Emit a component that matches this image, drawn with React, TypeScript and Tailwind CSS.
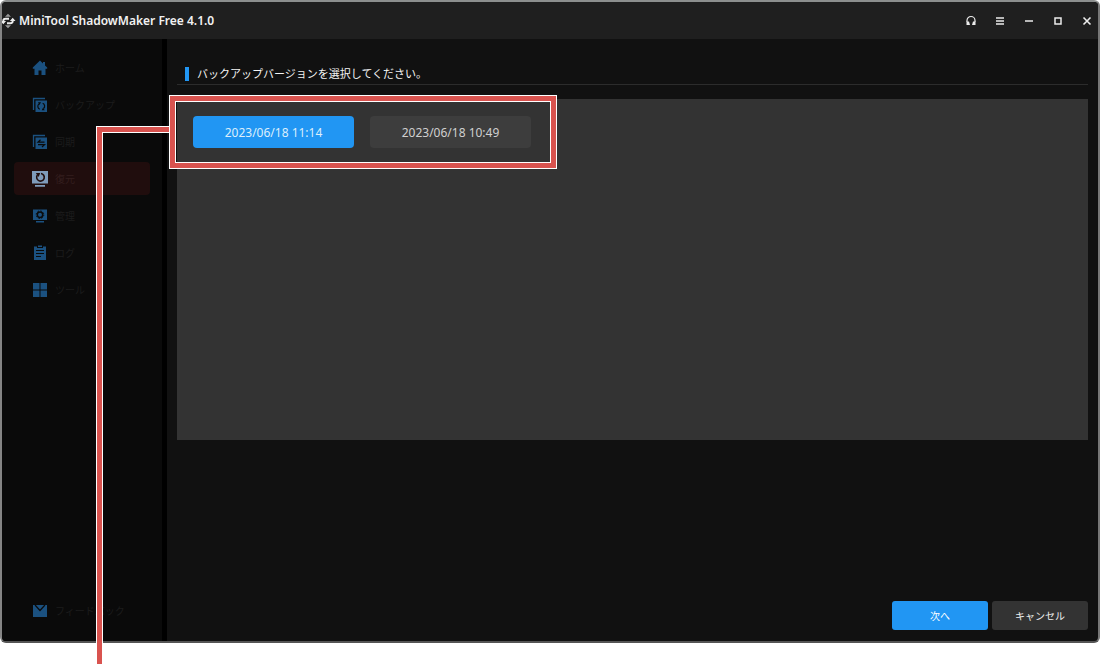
import { useState } from "react";
import type { ReactNode } from "react";

const HomeIcon = () => (
  <svg width="16" height="16" viewBox="0 0 16 16" fill="currentColor" aria-hidden="true">
    <path d="M8 .5.800 7.500v1.200H2.500V15h4v-4.500h3V15h4V8.700h1.700V7.500L13 5.400V2h-2v1.500z" />
  </svg>
);

const BackupIcon = () => (
  <svg width="16" height="16" viewBox="0 0 16 16" aria-hidden="true">
    <path d="M1.500 13V1.500H13" fill="none" stroke="currentColor" strokeWidth="1.300" />
    <rect x="3.500" y="3.500" width="11.500" height="11.500" fill="currentColor" />
    <path d="M7.800 12.300A3.200 3.200 0 0 1 7 6.900M10.700 6.200a3.200 3.200 0 0 1 .9 5.300" fill="none" stroke="#0a0a0a" strokeWidth="1.200" />
    <path d="M6 5.200h3L7.500 8zM12.700 13.200h-3l1.400-2.800z" fill="#0a0a0a" />
  </svg>
);

const SyncIcon = () => (
  <svg width="16" height="16" viewBox="0 0 16 16" aria-hidden="true">
    <path d="M1.500 13V1.500H13" fill="none" stroke="currentColor" strokeWidth="1.300" />
    <rect x="3.500" y="3.500" width="11.500" height="11.500" fill="currentColor" />
    <path d="M12.500 8.200H6L8.500 5.800M6 10.700h6.500L10 13" fill="none" stroke="#0a0a0a" strokeWidth="1.200" />
  </svg>
);

const RestoreIcon = () => (
  <svg width="18" height="18" viewBox="0 0 18 18" aria-hidden="true">
    <path d="M1 1h16v12.500H1zM4 15h10v1.800H4z" fill="#7f9bbb" />
    <path d="M6.400 5A3.800 3.800 0 1 0 10 3.500" fill="none" stroke="#200d0d" strokeWidth="1.600" />
    <path d="M4.800 3h4.400L7.700 7z" fill="#200d0d" />
  </svg>
);

const ManageIcon = () => (
  <svg width="16" height="16" viewBox="0 0 16 16" aria-hidden="true">
    <path d="M1 1.500h14v10.500H1zM4 13h8v1.500H4z" fill="currentColor" />
    <circle cx="8" cy="6.700" r="2.700" fill="none" stroke="#0a0a0a" strokeWidth="1.500" />
    <circle cx="8" cy="6.700" r="3.800" fill="none" stroke="#0a0a0a" strokeWidth="1" strokeDasharray="1.500 1.480" />
  </svg>
);

const LogIcon = () => (
  <svg width="16" height="16" viewBox="0 0 16 16" aria-hidden="true">
    <path d="M2 1.500h3V3h6V1.500h3v13.500H2zM6 .5h4v1.500H6z" fill="currentColor" />
    <path d="M4 5.500h8M4 8.500h8M4 11.500h5" stroke="#0a0a0a" strokeWidth="1.200" />
  </svg>
);

const ToolsIcon = () => (
  <svg width="16" height="16" viewBox="0 0 16 16" fill="currentColor" aria-hidden="true">
    <path d="M1 1h6.500v6.500H1zM8.500 1H15v6.500H8.500zM1 8.500h6.500V15H1zM8.500 8.500H15V15H8.500z" />
  </svg>
);

const MailIcon = () => (
  <svg width="16" height="16" viewBox="0 0 16 16" aria-hidden="true">
    <rect x="1" y="2" width="14" height="12" fill="currentColor" />
    <path d="M3 2l5 5.500L13 2" fill="none" stroke="#0a0a0a" strokeWidth="1.200" />
  </svg>
);

const Logo = () => (
  <svg width="16" height="16" viewBox="0 0 16 16" aria-hidden="true">
    <path d="M5 3.800 8 .8l3 3zM5 12.200l3 3 3-3z" fill="#9a9a9a" />
    <path d="M9 5.800H5.500Q3.300 5.800 3.300 8v1M7 10.200h3.500q2.200 0 2.200-2.200V7" fill="none" stroke="#ececec" strokeWidth="1.900" />
    <path d="M.5 8h5.600l-2.800 3.300zM9.900 8h5.600l-2.800-3.300z" fill="#ececec" />
  </svg>
);

const nav: { label: string; icon: ReactNode }[] = [
  { label: "ホーム", icon: <HomeIcon /> },
  { label: "バックアップ", icon: <BackupIcon /> },
  { label: "同期", icon: <SyncIcon /> },
  { label: "復元", icon: <RestoreIcon /> },
  { label: "管理", icon: <ManageIcon /> },
  { label: "ログ", icon: <LogIcon /> },
  { label: "ツール", icon: <ToolsIcon /> },
];

function NavItem({ label, icon, active }: { label: string; icon: ReactNode; active?: boolean }) {
  return (
    <button
      type="button"
      aria-current={active ? "page" : undefined}
      className={`flex h-[33px] w-full items-center gap-[6px] rounded px-[17px] text-[10px] ${
        active ? "bg-[#200d0d] text-[#331e1e]" : "text-[#1c1c1c]"
      }`}
    >
      <span className="flex w-[18px] justify-center text-[#1b5180]">{icon}</span>
      <span className="pt-0.5 whitespace-nowrap">{label}</span>
    </button>
  );
}

const windowControls: { label: string; icon: ReactNode }[] = [
  {
    label: "サポート",
    icon: (
      <>
        <path d="M2 7V5.500a4 4 0 0 1 8 0V7" fill="none" stroke="currentColor" strokeWidth="1.200" />
        <path d="M1.500 6.500H4l1 3.500H1.500zM10.500 6.500H8L7 10h3.500z" fill="currentColor" />
      </>
    ),
  },
  { label: "メニュー", icon: <path d="M2 3h8M2 6h8M2 9h8" stroke="currentColor" strokeWidth="1.500" /> },
  { label: "最小化", icon: <path d="M2 6h8" stroke="currentColor" strokeWidth="1.500" /> },
  {
    label: "最大化",
    icon: <rect x="3" y="3" width="6" height="6" fill="none" stroke="currentColor" strokeWidth="1.500" />,
  },
  { label: "閉じる", icon: <path d="m2.500 2.500 7 7m0-7-7 7" stroke="currentColor" strokeWidth="1.600" /> },
];

const versions = ["2023/06/18 11:14", "2023/06/18 10:49"];

export default function App() {
  const [selected, setSelected] = useState(0);

  return (
    <div className="relative flex min-h-screen flex-col bg-white pb-[21px] font-['Noto_Sans','Noto_Sans_CJK_JP',sans-serif]">
      <div className="flex flex-1 flex-col overflow-hidden rounded-md border-2 border-t-[#8c8f8e] border-r-[#777] border-b-[#555] border-l-[#858585] bg-[#111]">
        <header className="flex h-[37px] items-center justify-between bg-[#1f1f1f] pr-[3px]">
          <div className="flex items-center gap-[3px]">
            <span className="-ml-0.5">
              <Logo />
            </span>
            <h1 className="text-[12px] leading-4 font-semibold text-[#f2f2f2]">MiniTool ShadowMaker Free 4.1.0</h1>
          </div>
          <div className="flex items-center gap-[13px] text-[#ececec]">
            {windowControls.map((c) => (
              <button key={c.label} type="button" aria-label={c.label} className="flex size-4 items-center justify-center">
                <svg width="12" height="12" viewBox="0 0 12 12" aria-hidden="true">
                  {c.icon}
                </svg>
              </button>
            ))}
          </div>
        </header>

        <div className="flex flex-1">
          <nav className="flex w-[160px] shrink-0 flex-col justify-between bg-[#0a0a0a] px-3 pt-3 pb-[14px]">
            <div className="flex flex-col gap-1">
              {nav.map((n) => (
                <NavItem key={n.label} label={n.label} icon={n.icon} active={n.label === "復元"} />
              ))}
            </div>
            <NavItem label="フィードバック" icon={<MailIcon />} />
          </nav>
          <div className="w-[5px] shrink-0 bg-black" />

          <main className="flex flex-1 flex-col justify-between px-[10px] pb-[11px]">
            <section>
              <div className="flex items-center gap-2 border-b border-[#2c2c2c] px-2 pt-[26px] pb-px">
                <span className="h-[14px] w-1 bg-[#2196f3]" />
                <h2 className="text-[11px] leading-[18px] text-[#f4f4f4]">バックアップバージョンを選択してください。</h2>
              </div>
              <div className="relative mt-[14px] flex min-h-[341px] items-start gap-4 bg-[#333] px-4 py-[17px]">
                {versions.map((v, i) => (
                  <button
                    key={v}
                    type="button"
                    aria-pressed={i === selected}
                    onClick={() => setSelected(i)}
                    className={`h-8 w-[161px] rounded-sm pt-0.5 text-[12px] ${
                      i === selected ? "bg-[#2196f3] text-[#dceefc]" : "bg-[#3d3d3d] text-[#d0d0d0]"
                    }`}
                  >
                    {v}
                  </button>
                ))}
                <div className="pointer-events-none absolute -top-1 -left-2 h-[74px] w-[388px] border border-white">
                  <div className="h-full border-5 border-[#d9534f]">
                    <div className="h-full border border-white" />
                  </div>
                </div>
              </div>
            </section>
            <div className="flex justify-end gap-1">
              <button type="button" className="h-[29px] w-24 rounded-[3px] bg-[#2196f3] pt-0.5 text-[10px] text-white">
                次へ
              </button>
              <button type="button" className="h-[29px] w-24 rounded-[3px] bg-[#333] pt-0.5 text-[10px] text-[#f0f0f0]">
                キャンセル
              </button>
            </div>
          </main>
        </div>
      </div>

      <div className="pointer-events-none absolute top-[126px] bottom-0 left-[96px] w-[73px] border-t border-l border-white">
        <div className="h-full border-t-5 border-l-5 border-[#d9534f]">
          <div className="h-full border-t border-l border-white" />
        </div>
      </div>
    </div>
  );
}
